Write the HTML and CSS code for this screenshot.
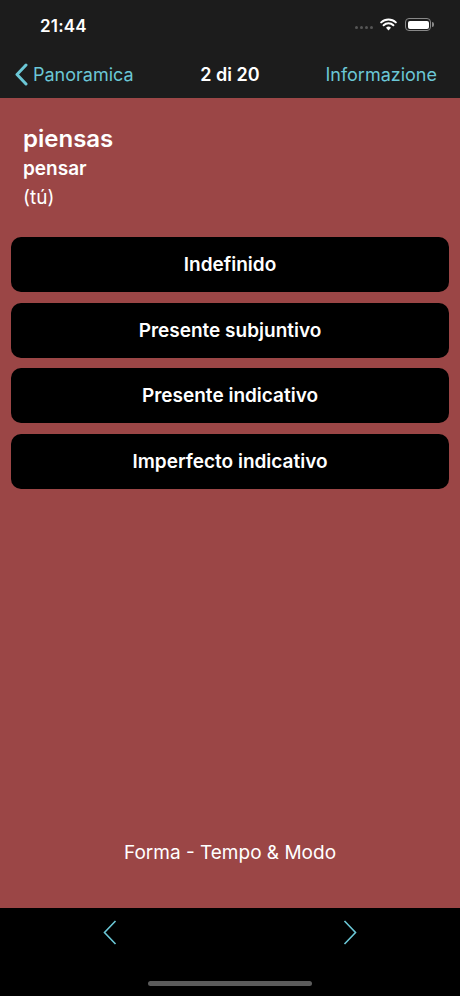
FILE: index.html
```html
<!DOCTYPE html>
<html>
<head>
    <meta charset="UTF-8">
    <meta name="viewport" content="width=device-width, initial-scale=1">
    <title>piensas</title>
    <link rel="stylesheet" href="styles.css">
</head>
<body>
    <div class="top">
        <div class="status">
            <span class="time">21:44</span>
            <div class="icons">
                <span class="dots"><i></i><i></i><i></i><i></i></span>
                <svg class="wifi" width="17" height="13" viewBox="0 0 17 13">
                    <path d="M8.5 12.6 L6 9.7 A3.6 3.6 0 0 1 11 9.7 Z" fill="#fff"/>
                    <path d="M3.6 7.2 A7 7 0 0 1 13.4 7.2" stroke="#fff" stroke-width="2" fill="none" stroke-linecap="round"/>
                    <path d="M1.2 4.4 A10.5 10.5 0 0 1 15.8 4.4" stroke="#fff" stroke-width="2" fill="none" stroke-linecap="round"/>
                </svg>
                <span class="battery"><span class="level"></span></span>
                <span class="nub"></span>
            </div>
        </div>
        <div class="navbar">
            <a class="back">
                <svg width="14" height="23" viewBox="0 0 14 23">
                    <path d="M12 2 L3 11.5 L12 21" stroke="#6bc7d6" stroke-width="3" fill="none" stroke-linecap="round" stroke-linejoin="round"/>
                </svg>
                Panoramica
            </a>
            <span class="title">2 di 20</span>
            <a class="info">Informazione</a>
        </div>
    </div>

    <div class="card">
        <div class="word">
            <h1>piensas</h1>
            <h2>pensar</h2>
            <p>(tú)</p>
        </div>
        <div class="choices">
            <button>Indefinido</button>
            <button>Presente subjuntivo</button>
            <button>Presente indicativo</button>
            <button>Imperfecto indicativo</button>
        </div>
        <div class="hint">Forma - Tempo &amp; Modo</div>
    </div>

    <div class="toolbar">
        <div class="arrows">
            <svg width="14" height="25" viewBox="0 0 14 25">
                <path d="M12.5 1 L1.5 12.5 L12.5 24" stroke="#6bc7d6" stroke-width="1.6" fill="none"/>
            </svg>
            <svg width="14" height="25" viewBox="0 0 14 25">
                <path d="M1.5 1 L12.5 12.5 L1.5 24" stroke="#6bc7d6" stroke-width="1.6" fill="none"/>
            </svg>
        </div>
        <div class="home"></div>
    </div>
</body>
</html>
```

FILE: styles.css
```css
*{
    box-sizing:border-box;
}
body{
    margin:0;
    width:460px;
    height:996px;
    display:flex;
    flex-direction:column;
    font-family:Inter, "Liberation Sans", sans-serif;
    color:#fff;
    background:#000;
}
.top{
    background:#1c1c1c;
    height:98px;
}
.status{
    height:50px;
    display:flex;
    justify-content:space-between;
    align-items:center;
    padding:0 26px 0 40px;
}
.time{
    font-size:17px;
    font-weight:600;
    letter-spacing:0.2px;
    margin-top:2px;
}
.icons{
    display:flex;
    align-items:center;
    margin-top:-1px;
}
.dots{
    display:flex;
    gap:2px;
    margin-right:7px;
    margin-top:6px;
}
.dots i{
    width:3px;
    height:3px;
    border-radius:50%;
    background:#555;
}
.wifi{
    margin-right:8px;
}
.battery{
    width:26px;
    height:13px;
    border:1.5px solid #888;
    border-radius:4px;
    padding:1.5px;
    display:flex;
}
.level{
    flex:1;
    background:#fff;
    border-radius:2px;
}
.nub{
    width:2px;
    height:5px;
    background:#888;
    border-radius:0 2px 2px 0;
    margin-left:1px;
}
.navbar{
    height:48px;
    display:flex;
    align-items:center;
    justify-content:space-between;
    padding:0 23px 0 14px;
    font-size:18px;
    position:relative;
}
.back,
.info{
    color:#6bc7d6;
    display:flex;
    align-items:center;
    gap:5px;
}
.title{
    position:absolute;
    left:0;
    right:0;
    text-align:center;
    font-weight:600;
    pointer-events:none;
}
.card{
    flex:1;
    background:#9b4646;
    display:flex;
    flex-direction:column;
    padding:26px 11px 0 11px;
}
.word{
    padding-left:12px;
}
.word h1{
    font-size:24px;
    font-weight:600;
    margin:0;
    line-height:30px;
}
.word h2{
    font-size:19px;
    font-weight:600;
    margin:0;
    line-height:29px;
}
.word p{
    font-size:19px;
    margin:0;
    line-height:29px;
}
.choices{
    margin-top:25px;
    display:flex;
    flex-direction:column;
    gap:10.5px;
}
button{
    height:55px;
    background:#000;
    color:#fff;
    border:none;
    border-radius:10px;
    font-family:inherit;
    font-size:19px;
    font-weight:600;
}
.hint{
    margin-top:auto;
    margin-bottom:44px;
    text-align:center;
    font-size:19px;
}
.toolbar{
    height:88px;
    background:#000;
    display:flex;
    flex-direction:column;
    align-items:center;
}
.arrows{
    width:100%;
    display:flex;
    justify-content:space-between;
    padding:12px 103px 0 103px;
}
.home{
    margin-top:36px;
    width:164px;
    height:5px;
    border-radius:3px;
    background:#5b5b5b;
}
```
